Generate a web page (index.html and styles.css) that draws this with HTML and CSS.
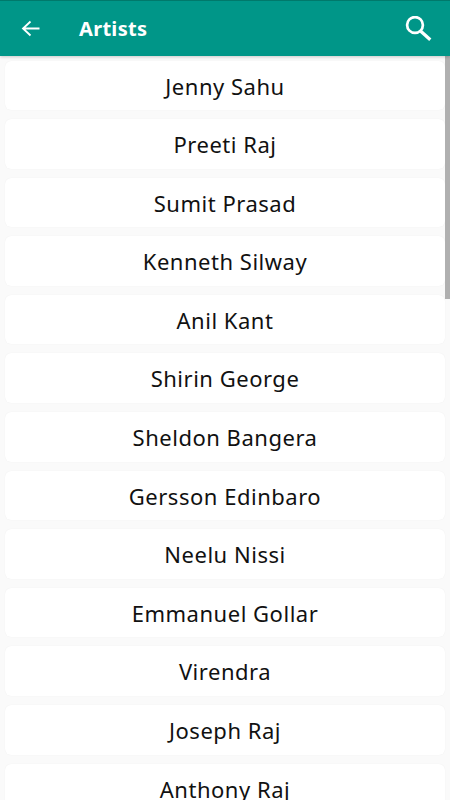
FILE: index.html
```html
<!DOCTYPE html>
<html lang="en">
<head>
  <meta charset="UTF-8" />
  <meta name="viewport" content="width=device-width, initial-scale=1.0"/>
  <title>Artists</title>
  <link rel="stylesheet" href="styles.css">
</head>
<body>

  <header class="toolbar">
    <svg class="back-icon" viewBox="0 0 20 18" width="20" height="18"><path d="M9.500 1.500 2 8.500l7.500 7M2 8.500h16.500"/></svg>
    <h1>Artists</h1>
    <svg class="search-icon" viewBox="0 0 28 26" width="28" height="26"><circle cx="10" cy="9" r="7.900"/><path class="handle" d="M15.500 15 25.300 23.700"/></svg>
  </header>

  <main class="artist-list">
    <div class="artist">Jenny Sahu</div>
    <div class="artist">Preeti Raj</div>
    <div class="artist">Sumit Prasad</div>
    <div class="artist">Kenneth Silway</div>
    <div class="artist">Anil Kant</div>
    <div class="artist">Shirin George</div>
    <div class="artist">Sheldon Bangera</div>
    <div class="artist">Gersson Edinbaro</div>
    <div class="artist">Neelu Nissi</div>
    <div class="artist">Emmanuel Gollar</div>
    <div class="artist">Virendra</div>
    <div class="artist">Joseph Raj</div>
    <div class="artist">Anthony Raj</div>
    <div class="scroll-thumb"></div>
  </main>

</body>
</html>
```
FILE: styles.css
```css
*{box-sizing:border-box}
body{margin:0;height:800px;overflow:hidden;background:#fafafa;font-family:"Noto Sans",sans-serif;color:#111}
.toolbar{position:relative;z-index:1;display:flex;align-items:center;height:56px;padding:0 17px 0 21px;background:#009688;border-top:1px solid #00796b;box-shadow:0 1px 3px rgba(0,0,0,.2);color:#fff}
.toolbar svg{fill:none;stroke:#fff}
.toolbar h1{flex:1;margin:0 0 0 38px;font-size:20px;line-height:28px;font-weight:bold;letter-spacing:.3px}
.back-icon{stroke-width:1.8}
.search-icon{stroke-width:2.7}
.search-icon .handle{stroke-width:3.3}
.artist-list{position:relative;display:flex;flex-direction:column;gap:9px;padding:4.5px 5px 0}
.artist{flex:none;height:49.6px;border-radius:6px;background:#fff;font-size:22px;letter-spacing:.52px;line-height:50px;text-align:center;box-shadow:0 0 1px rgba(0,0,0,.08)}
.scroll-thumb{position:absolute;top:0;right:0;width:5px;height:243px;background:#b0b0b0}
```
